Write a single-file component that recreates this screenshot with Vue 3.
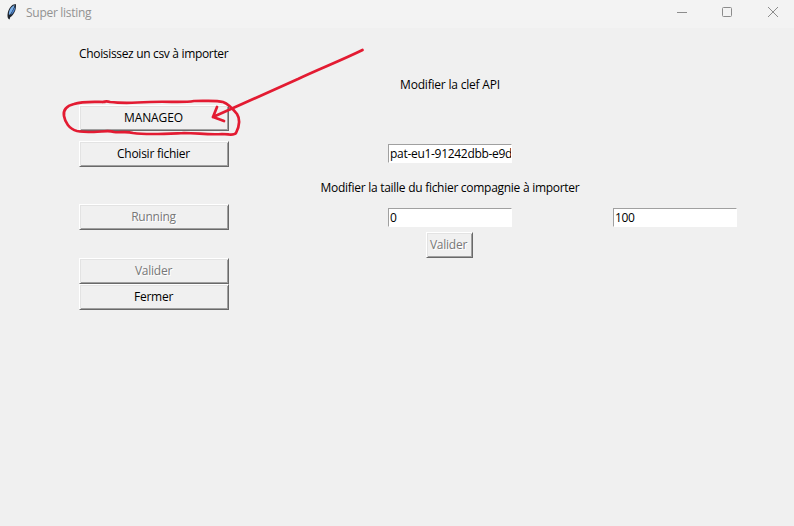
<script setup>
import { ref } from 'vue'

const apiKey = ref('pat-eu1-91242dbb-e9d')
const start = ref('0')
const size = ref('100')
</script>

<template>
  <div class="window">
    <header class="titlebar">
      <svg class="feather" width="12" height="18" viewBox="0 0 12 18">
        <path d="M1.7 14.5 C1 10.5 2.5 4.6 6.8 1.7 L9.8 .9 C10.6 5 9 10 5.6 13.2 L4.2 14.2 L3.6 16.6 L2.6 16 Z" fill="#1d232c" />
        <path d="M2.9 11.6 C2.7 7.6 4.6 4 8.7 2 C8 5.3 5.8 8.6 3.9 11.8 Z" fill="#78aee8" />
        <path d="M4.6 11.9 L6.6 7.8 L9.3 3.4 C9.3 7.1 7.6 10 4.6 11.9 Z" fill="#4b83cf" />
      </svg>
      <span class="title">Super listing</span>
      <svg class="controls" width="104" height="24" viewBox="0 0 104 24" fill="none" stroke="#8c8c8c">
        <path d="M0 12.5 H10" />
        <rect x="45.5" y="7.5" width="9" height="9" rx="1" />
        <path d="M91 7 L101 17 M101 7 L91 17" />
      </svg>
    </header>

    <main class="content">
      <section class="column actions">
        <p class="label choose">Choisissez un csv à importer</p>
        <button class="button manageo">MANAGEO</button>
        <button class="button file">Choisir fichier</button>
        <button class="button running" disabled>Running</button>
        <button class="button validate" disabled>Valider</button>
        <button class="button">Fermer</button>
      </section>

      <section class="column settings">
        <p class="label api">Modifier la clef API</p>
        <input v-model="apiKey" class="entry key" type="text" />
        <p class="label range">Modifier la taille du fichier compagnie à importer</p>
        <input v-model="start" class="entry" type="text" />
        <button class="button small" disabled>Valider</button>
      </section>

      <section class="column limit">
        <input v-model="size" class="entry" type="text" />
      </section>
    </main>

    <svg class="annotation" width="794" height="526" viewBox="0 0 794 526">
      <path d="M105 102 C95 102 83 101 74 104 C66 106 63 110 64 116 C65 122 69 129 77 131 C82 132 88 132 94 132 C102 132 108 130 114 132 C120 133 126 131 133 133 C147 135 162 134 184 133 C198 133 208 135 222 134 C229 134 234 136 236 133 C239 127 241 120 237 114 C233 109 229 104 223 102 C216 100 206 101 194 101 C182 103 168 101 150 102 C134 103 118 103 110 102 C107 101 106 101 103 102" />
      <path d="M362.5 50 C340 61 319 69 298 79 L213 117 M217 107 L213 117 L224 121" />
    </svg>
  </div>
</template>

<style>
body {
  overflow: hidden;
}
</style>

<style scoped>
.window {
  position: relative;
  width: 794px;
  height: 526px;
  overflow: hidden;
  background: #f0f0f0;
  color: #000;
  font: 12px/16px "Open Sans", "Noto Sans", sans-serif;
  letter-spacing: -0.3px;
}

.titlebar {
  display: flex;
  box-sizing: border-box;
  height: 28px;
  padding-left: 6px;
  background: #f3f3f3;
  color: #929292;
}

.feather {
  margin-top: 3px;
}

.title {
  margin: 5px 0 0 8px;
  letter-spacing: -0.28px;
}

.controls {
  margin-left: auto;
  margin-right: 13px;
}

.content {
  display: grid;
  grid-template-columns: 150px 260px 124px;
  column-gap: 91px;
  padding-left: 79px;
}

.column {
  display: flex;
  flex-direction: column;
}

.label {
  margin: 0;
  white-space: nowrap;
}

.choose {
  margin: 18px 0 43px;
  letter-spacing: -0.33px;
}

.button {
  box-sizing: border-box;
  flex: none;
  height: 26px;
  margin: 0;
  padding: 0 1px 0 0;
  border: 1px solid;
  border-color: #fff #696969 #696969 #fff;
  border-radius: 0;
  background: #f0f0f0;
  box-shadow: inset 1px 1px #e3e3e3, inset -1px -1px #a0a0a0;
  color: #000;
  font: inherit;
  letter-spacing: -0.25px;
}

.button:disabled {
  color: #787878;
  text-shadow: 1px 1px #fff;
}

.manageo {
  margin-bottom: 10px;
  letter-spacing: -0.1px;
}

.file {
  margin-bottom: 37px;
}

.running {
  margin-bottom: 28px;
}

.settings {
  align-items: center;
}

.api {
  margin: 49px 0 51px;
  letter-spacing: -0.2px;
}

.range {
  margin-bottom: 12px;
  letter-spacing: -0.28px;
}

.entry {
  box-sizing: border-box;
  flex: none;
  width: 124px;
  height: 19px;
  margin: 0;
  padding: 0 0 1px 1px;
  border: 1px solid;
  border-color: #a0a0a0 #fff #fff #a0a0a0;
  border-radius: 0;
  background: #fff;
  color: #000;
  font: inherit;
  letter-spacing: inherit;
}

.key {
  margin-bottom: 17px;
}

.small {
  width: 47px;
  margin: 5px 1px 0 0;
  position: relative;
  left: -0.5px;
}

.limit {
  margin-left: -58px;
  width: 124px;
  padding-top: 180px;
}

.annotation {
  position: absolute;
  inset: 0;
  pointer-events: none;
  fill: none;
  stroke: #e31b32;
  stroke-width: 2.7;
  stroke-linecap: round;
  stroke-linejoin: round;
}
</style>
